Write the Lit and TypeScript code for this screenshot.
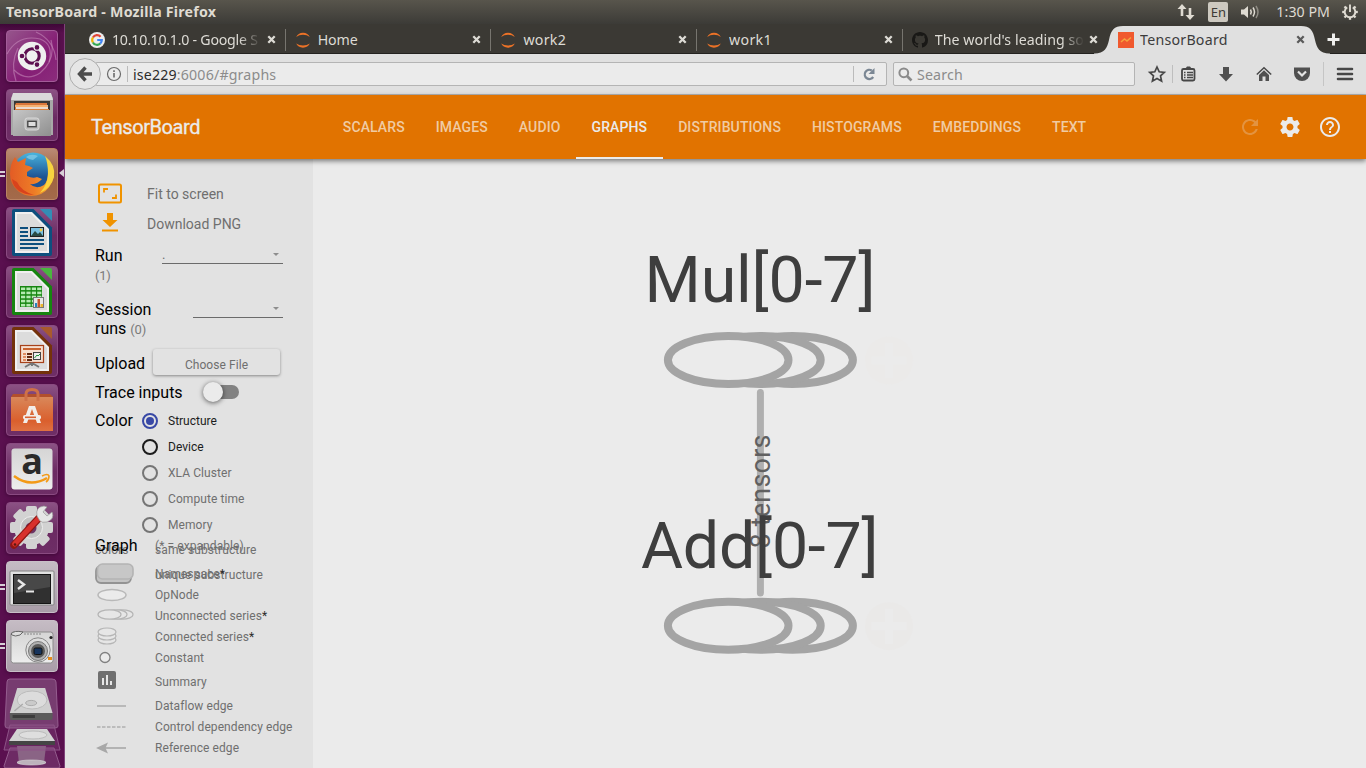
import { LitElement, html, svg, css } from "lit";
import { customElement } from "lit/decorators.js";
import { classMap } from "lit/directives/class-map.js";
import { styleMap } from "lit/directives/style-map.js";

/* ---------- Unity launcher ---------- */

const office = (frame: string, flap: string, body: unknown) => svg`
  <path d="M8 2H27.500L46 20.500V47Q46 49 44 49H8Q6 49 6 47V4Q6 2 8 2Z" fill=${frame}/>
  <path d="M34 2H44Q46 2 46 4V14Z" fill=${flap}/>
  <path d="M9 5H26L43 22V46H9Z" fill="#f0f0f0"/>
  <path d="M11 7H25L41 23V44H11Z" fill="#dcdcdc"/>${body}`;

const drive = svg`
  <path d="M11 10H41L49 35H3Z" fill="#cfcfcf"/>
  <path d="M3 35H49V40Q49 42 46 42H6Q3 42 3 40Z" fill="#5b5b5b"/>
  <path d="M6 37H30V40H6Z" fill="#3c3c3c"/>
  <ellipse cx="27" cy="22" rx="16" ry="9" fill="#dcdcdc" stroke="#bbb"/>
  <ellipse cx="26" cy="25" rx="6" ry="2.6" fill="#cacaca" stroke="#aaa"/>
  <path d="M8 33L17 26" stroke="#aaa" stroke-width="1.5"/>`;

const icons: { art: unknown; tile: string; pips?: boolean; focus?: boolean }[] = [
  { tile: "dash", art: svg`
    <g fill="none" stroke="#d7a3cd" stroke-opacity=".45" stroke-width="1.2">
      <path d="M1 24Q12 4 34 9Q48 14 43 32"/><path d="M45 10Q50 30 34 43Q20 52 8 40"/>
      <path d="M10 51Q4 34 12 18"/><path d="M30 2Q48 10 50 30"/></g>
    <circle cx="26" cy="26" r="14.2" fill="#efefef"/>
    <circle cx="26" cy="26" r="7.2" fill="none" stroke="#5d0e50" stroke-width="3.1"/>
    <g fill="#5d0e50" stroke="#efefef" stroke-width="1.1"><circle cx="16" cy="26" r="2.9"/>
    <circle cx="31" cy="17.4" r="2.9"/><circle cx="31" cy="34.6" r="2.9"/></g>` },
  { tile: "plain", art: svg`
    <path d="M7 5H45L47 9V46H5V9Z" fill="#a8a8a8"/><path d="M7 4H45L47 11H5Z" fill="#dadada"/>
    <rect x="8" y="12" width="36" height="11" fill="#373737"/>
    <path d="M10 14H41V24H9V16Z" fill="#d8763b"/><rect x="9" y="16" width="33" height="2" fill="#f3b173"/>
    <rect x="10" y="18" width="32" height="2" fill="#eadbd0"/><rect x="9" y="20" width="34" height="3" fill="#db803c"/>
    <path d="M7 21H45V47H7Z" fill="url(#metal)"/>
    <rect x="19" y="29" width="14" height="12" rx="2.5" fill="#bdbdbd" stroke="#d9d9d9"/>
    <rect x="21.8" y="32.3" width="8.4" height="5.4" fill="#ddd" stroke="#484848" stroke-width="1.4"/>` },
  { tile: "fox", pips: true, focus: true, art: svg`
    <circle cx="27" cy="25" r="20.5" fill="url(#globe)"/>
    <path d="M20 9Q25 5 32 8L27 12L23 11Z" fill="#87cde8" opacity=".7"/>
    <path d="M4 26Q4 16 9 9L12 14L20 10L19 17Q24 18 27 20L21 24L21 28Q27 31 31 29L36 31Q31 37 24 36Q30 42 38 37Q42 33 42 24L48 28Q45 41 35 46Q22 51 12 43Q4 36 4 26Z" fill="url(#fire)"/>
    <path d="M39 8Q50 17 48 29Q45 40 34 45Q42 36 42 26Q42 15 39 8Z" fill="#f8d43f"/>
    <path d="M6 31Q8 46 28 47Q15 43 11 34Z" fill="#d8431d"/>` },
  { tile: "plain", art: office("#0d4f7e", "#338db5", svg`
    <g stroke="#0d4f7e" stroke-width="2"><path d="M14 21H22M14 25H22M14 29H22M14 33H38M14 37H38M14 41H32"/></g>
    <rect x="24.500" y="20.500" width="13" height="9" fill="#7bc1e2" stroke="#222"/>
    <path d="M25 29L29 24L32 27L34 25L37 29Z" fill="#294b45"/><circle cx="35" cy="23" r="1.4" fill="#f4c63f"/>`) },
  { tile: "plain", art: office("#168510", "#4ab63f", svg`
    <rect x="14" y="20" width="22" height="21" fill="#168510"/>
    <g fill="#b5eab1">${[21.5, 25.6, 29.7, 33.8, 37.9].map((y) => [15, 20.4, 25.8, 31.2].map((x) => svg`<rect x=${x} y=${y} width="4.2" height="2.6"/>`))}</g>
    <rect x="27.5" y="31.5" width="10" height="10" fill="#e7e7e7" stroke="#777"/>
    <path d="M29 41V37H31V41Z" fill="#2684bd"/><path d="M31.5 41V33H34V41Z" fill="#c7532c"/><path d="M34.5 41V38H37V41Z" fill="#eab52e"/>`) },
  { tile: "plain", art: office("#74320b", "#a85a2d", svg`
    <rect x="14.5" y="20.5" width="23" height="17" fill="#f6dfd0" stroke="#a7421b" stroke-width="1.2"/>
    <rect x="17" y="23" width="18" height="2" fill="#c9632f"/>
    <path d="M17 29H20M17 32H20M17 35H20" stroke="#df8c62" stroke-width="2"/>
    <path d="M21 29H26M21 32H26M21 35H26" stroke="#632a13" stroke-width="2"/>
    <rect x="27.5" y="27.5" width="7" height="7" fill="#eee" stroke="#444"/><path d="M28.5 33L31 30L32 31L34 29" fill="none" stroke="#23933a"/>
    <path d="M26 38L19 42M26 38L33 42M26 38V41" stroke="#777" stroke-width="2"/>`) },
  { tile: "plain", art: svg`
    <path d="M5 13L7 10H44L47 13V18H5Z" fill="#b24f2c"/><path d="M5 13H47V47H5Z" fill="url(#bag)"/>
    <path d="M20 17V10Q20 5.5 26 5.5Q32 5.5 32 10V17" fill="none" stroke="#cf7148" stroke-width="3"/>
    <path d="M23 22H29L35 39H31L26 25L21 39H17Z" fill="#f2ede9"/><rect x="17" y="31" width="18" height="4.6" rx="2" fill="#f2ede9"/>
    <path d="M19 33.3H30" stroke="#d86334" stroke-width="1.6"/>` },
  { tile: "plain", art: svg`
    <rect x="5.5" y="5.500" width="41" height="41" rx="3" fill="url(#paper)"/>
    <text class="glyph-a" x="26" y="30.500" text-anchor="middle">a</text>
    <path d="M8 33Q24 45 41 35" fill="none" stroke="#f39a17" stroke-width="2.6"/><path d="M36 33Q42 30 43 33Q43 37 40 39" fill="none" stroke="#f39a17" stroke-width="1.6"/>` },
  { tile: "plain", art: svg`
    <g fill="#d2d2d2">${[0, 45, 90, 135].map((a) => svg`<rect x="20" y="4" width="11" height="43" rx="2" transform="rotate(${a} 25.5 25.5)"/>`)}
    <circle cx="25.5" cy="25.5" r="17.5"/></g><circle cx="25.5" cy="25.5" r="11" fill="#c3c3c3" stroke="#eee"/>
    <circle cx="25" cy="26" r="5.5" fill="#6c3565"/>
    <path d="M8 43L33 16" stroke="#901713" stroke-width="7.4" stroke-linecap="round"/><path d="M8.6 42L33 16" stroke="#d8312c" stroke-width="5" stroke-linecap="round"/>
    <path d="M31 14Q29 5 38 4L41 5L37 10L41 14L46 10Q49 17 41 20Q36 21 34 19Z" fill="#e5e5e5" stroke="#999" stroke-width=".7"/><circle cx="9" cy="42.5" r="1.3" fill="#5a1812"/>` },
  { tile: "light", pips: true, art: svg`
    <rect x="4" y="10" width="44" height="34" rx="1" fill="#e1e1e1" stroke="#818181"/>
    <rect x="7.5" y="13.5" width="37" height="29" fill="#303030" stroke="#151515"/><path d="M8 14H44V26L8 32Z" fill="#484848"/>
    <path d="M12 19L18 23.5L12 28" fill="none" stroke="#e8e8e8" stroke-width="2.4"/><path d="M20 30.5H28" stroke="#e8e8e8" stroke-width="2"/>` },
  { tile: "light", pips: true, art: svg`
    <rect x="5" y="12" width="42" height="31" rx="2.5" fill="url(#paper)" stroke="#8b8b8b"/>
    <path d="M5 14Q8 10 17 12L14 15Q9 17 6 15Z" fill="#ddd" stroke="#666"/><path d="M18 14H35" stroke="#888" stroke-dasharray="2 1"/>
    <circle cx="32" cy="30" r="12.2" fill="#dedede" stroke="#888"/><circle cx="32" cy="31" r="9.500" fill="#b0b0b0" stroke="#777"/>
    <circle cx="32" cy="31" r="7" fill="#5a5a5a"/><rect x="28" y="28" width="8" height="6.500" rx="1.5" fill="#17345c" stroke="#111"/>
    <circle cx="45" cy="17.5" r="1.6" fill="#222"/><rect x="42" y="37" width="4" height="3" fill="#e78c1b"/>` },
];

@customElement("unity-launcher")
class UnityLauncher extends LitElement {
  static styles = css`
    :host { display: flex; flex-direction: column; align-items: center; gap: 7px; width: 65px; box-sizing: border-box;
      padding-top: 6px; border-right: 1px solid #80427a; overflow: hidden; flex: none;
      background: linear-gradient(#3e0737 0, #5a104f 9px, #5a104f 100%); }
    .tile { position: relative; flex: none; width: 50px; height: 50px; border: 1px solid #8a4a81; border-radius: 4px;
      background: linear-gradient(#8b5284, #6b2a62 55%, #6e2e66); box-shadow: 0 1px 4px #3d0836; }
    .tile svg { position: absolute; left: -1px; top: -1px; }
    .dash { background: linear-gradient(135deg, #96558c, #851e75 60%, #8b2c7c); border-color: #a35c99; }
    .fox { background: linear-gradient(#b98a75, #a0643f 50%, #a36a4b); border-color: #b98363; }
    .light { background: linear-gradient(#c5bcc4, #a99da8); border-color: #c8bfc7; }
    .pip { position: absolute; left: -7px; width: 5px; height: 2px; background: #d8cfd7; }
    .p1 { top: 22px; } .p2 { top: 26px; }
    .arrow { position: absolute; left: 52px; top: 20px; border: 4px solid transparent; border-right: 5px solid #d8cfd7; border-left: 0; }
    .stack { flex: none; display: flex; margin-top: -1px; }
    .glyph-a { font: bold 36px "Open Sans", sans-serif; fill: #2a2a2a; }
  `;
  render() {
    return html`
      ${icons.map((i) => html`<div class=${classMap({ tile: true, [i.tile]: true })}>
        <svg width="52" height="52" viewBox="0 0 52 52">
          <defs>
            <linearGradient id="metal" x2="1" y2="1"><stop stop-color="#c6c6c6"/><stop offset="1" stop-color="#8f8f8f"/></linearGradient>
            <linearGradient id="globe" x2="0" y2="1"><stop stop-color="#49b5df"/><stop offset=".6" stop-color="#1d5393"/></linearGradient>
            <linearGradient id="fire"><stop stop-color="#e35c25"/><stop offset=".55" stop-color="#ee7c26"/><stop offset="1" stop-color="#f6b731"/></linearGradient>
            <linearGradient id="bag" x2="0" y2="1"><stop stop-color="#d9885a"/><stop offset=".7" stop-color="#da5f2d"/><stop offset="1" stop-color="#df7142"/></linearGradient>
            <linearGradient id="paper" x2="0" y2="1"><stop stop-color="#d5d5d5"/><stop offset="1" stop-color="#ededed"/></linearGradient>
          </defs>${i.art}</svg>
        ${i.pips ? html`<i class="pip p1"></i><i class="pip p2"></i>` : ""}
        ${i.focus ? html`<i class="arrow"></i>` : ""}
      </div>`)}
      <svg class="stack" width="60" height="92" viewBox="0 0 60 92">
        <path d="M2 88L8 70H52L58 88Q58 90 56 90H4Q2 90 2 88Z" fill="#6d2a64" stroke="#935c8d"/>
        <path d="M15 68H44L42 85H17Z" fill="#8a6485"/><ellipse cx="29.500" cy="84.500" rx="14.500" ry="2.500" fill="#bdb3bc" stroke="#ddd" stroke-width=".6"/>
        <path d="M8 1H50Q54 1 54 4L56 48Q56 50 53 50H5Q3 50 3 47L5 4Q5 1 8 1Z" fill="#773c70" stroke="#955d8f"/>
        <g transform="translate(5 0) scale(.93 1)">${drive}</g>
        <path d="M2 72L8 47H52L58 72Z" fill="#8d5387" fill-opacity=".3" stroke="#8d5387"/>
        <path d="M15 51H45L53 63H7Z" fill="#d3d3d3"/><path d="M7 63H53V67H7Z" fill="#454545"/><ellipse cx="31" cy="57" rx="14" ry="4" fill="#dedede" stroke="#bbb"/>
      </svg>`;
  }
}

/* ---------- Browser chrome ---------- */

const jupiter = svg`<path d="M1.200 5Q3 1 8 .8Q13 1 14.800 5Q12 2.800 8 2.800Q4 2.800 1.200 5Z" fill="#ec7227"/>
  <path d="M1.200 11.500Q4 13.500 8 13.500Q12 13.500 14.800 11.500Q13 15.500 8 15.700Q3 15.500 1.200 11.500Z" fill="#ec7227"/>`;
const google = svg`<circle cx="8" cy="8" r="8" fill="#ededed"/>
  <g fill="none" stroke-width="2.200"><path d="M11.600 4.700A4.800 4.800 0 0 0 3.900 5.500" stroke="#e04335"/><path d="M3.900 5.500A4.800 4.800 0 0 0 3.900 10.500" stroke="#edb405"/>
  <path d="M3.900 10.500A4.800 4.800 0 0 0 11.300 11.500" stroke="#34a853"/><path d="M11.200 11.600A4.800 4.800 0 0 0 12.800 8H8.200" stroke="#4285f4"/></g>`;
const github = svg`<path fill="#191816" d="M8 0C3.580 0 0 3.580 0 8c0 3.540 2.290 6.530 5.470 7.590.4.070.55-.17.55-.38 0-.19-.01-.82-.01-1.490-2.010.37-2.530-.49-2.690-.94-.09-.23-.48-.94-.82-1.130-.28-.15-.68-.52-.01-.53.63-.01 1.080.58 1.230.82.72 1.210 1.870.87 2.330.66.070-.52.28-.87.51-1.070-1.780-.2-3.640-.89-3.640-3.950 0-.87.31-1.590.82-2.150-.08-.2-.36-1.020.08-2.120 0 0 .67-.21 2.200.82.64-.18 1.320-.27 2-.27s1.360.09 2 .27c1.530-1.040 2.200-.82 2.200-.82.44 1.100.16 1.920.08 2.120.51.56.82 1.270.82 2.150 0 3.070-1.870 3.750-3.650 3.950.29.25.54.73.54 1.480 0 1.070-.01 1.930-.01 2.200 0 .21.15.46.55.38A8.010 8.010 0 0 0 16 8c0-4.420-3.580-8-8-8z"/>`;

const closeX = html`<svg class="x" width="9" height="9" viewBox="0 0 9 9"><path d="M1.300 1.300L7.700 7.700M7.700 1.300L1.300 7.700" stroke="currentColor" stroke-width="2.300"/></svg>`;

@customElement("browser-tabs")
class BrowserTabs extends LitElement {
  static styles = css`
    :host { display: flex; height: 30px; box-sizing: border-box; background: #3b3934; border-bottom: 1px solid #23221f;
      padding-left: 15px; position: relative; color: #dddbd5; font: 14.2px "Noto Sans", sans-serif; flex: none; }
    .tab { display: flex; align-items: center; width: 205.700px; box-sizing: border-box; height: 31px; padding-left: 9px; flex: none; position: relative; }
    .tab + .tab::before { content: ""; position: absolute; left: -1px; top: 5px; height: 22px; width: 1px; background: #77756f; }
    .label { margin-left: 7px; width: 148px; white-space: nowrap; overflow: hidden; line-height: 22px; }
    .fade { mask-image: linear-gradient(90deg, #000 127px, transparent 149px); }
    .x { margin-left: 6.500px; color: #dddbd5; }
    .active { position: absolute; left: 1029px; top: 0; }
    .top { position: absolute; left: 1053px; top: 0; height: 31px; display: flex; align-items: center; color: #3c3c3c; letter-spacing: .25px; }
    .top .label { margin-left: 6px; }
    .top .x { color: #5a5a5a; margin-left: 7.500px; }
    .plus { margin-left: 21px; }
  `;
  render() {
    const tabs: [unknown, string, number, boolean][] = [
      [google, "10.10.10.1.0 - Google S", -0.25, true], [jupiter, "Home", -0.1, false],
      [jupiter, "work2", 0.3, false], [jupiter, "work1", 0.3, false], [github, "The world's leading so", 0.05, true]];
    return html`
      ${tabs.map(([icon, label, sp, fade]) => html`<div class="tab"><svg width="16" height="16">${icon}</svg>
        <span class=${classMap({ label: true, fade })} style=${styleMap({ letterSpacing: sp + "px" })}>${label}</span>${closeX}</div>`)}
      <svg class="active" width="240" height="30"><path d="M0 30V29.500C11 29.500 13 24 15 16C17 6 20 2 29 2H207C216 2 219 6 221 16C223 24 225 29.500 236 29.500V30Z" fill="#e0e0e0"/></svg>
      <div class="top"><svg width="16" height="16"><rect width="16" height="16" fill="#f0592e"/><path d="M3 10L6.500 7L9 9L13 5.500" fill="none" stroke="#f4a23e" stroke-width="1.600"/></svg>
        <span class="label">TensorBoard</span>${closeX}
        <svg class="plus" width="15" height="15"><path d="M7.500 1.500V13.500M1.500 7.500H13.500" stroke="#f0f0ee" stroke-width="3"/></svg></div>`;
  }
}

@customElement("browser-toolbar")
class BrowserToolbar extends LitElement {
  static styles = css`
    :host { display: flex; height: 41px; box-sizing: border-box; border-bottom: 1px solid #b4b4b4; background: #e0e0e0;
      padding: 8px 0 0 30px; position: relative; font: 14.2px/24px "Noto Sans", sans-serif; color: #8c8c8c; flex: none; }
    .field { box-sizing: border-box; height: 24px; border: 1px solid #b4b4b4; border-radius: 2px; background: #ebebeb; display: flex; align-items: center; }
    .url { width: 792px; padding-left: 10px; }
    .search { width: 242px; margin-left: 6px; padding-left: 4px; gap: 4px; }
    .host { color: #2c2c2c; }
    .bar { width: 1px; height: 16px; background: #bbb; margin: 0 5px; }
    .addr { flex: 1; line-height: 24px; padding-top: 1px; white-space: nowrap; letter-spacing: .17px; }
    .reload { margin-right: 10px; margin-left: 3px; }
    .back { position: absolute; left: 4px; top: 4px; }
    .tools { height: 24px; }
    .q { line-height: 24px; padding-top: 1px; letter-spacing: .15px; }
  `;
  render() {
    return html`
      <div class="field url">
        <svg width="16" height="16" viewBox="0 0 16 16"><circle cx="8" cy="8" r="6.500" fill="none" stroke="#6a6a6a" stroke-width="1.200"/><path d="M8 7V11.500M8 4.300V5.900" stroke="#6a6a6a" stroke-width="1.600"/></svg>
        <i class="bar"></i><span class="addr"><span class="host">ise229</span>:6006/#graphs</span><i class="bar"></i>
        <svg class="reload" width="14" height="14" viewBox="0 0 14 14"><path d="M11.200 10A4.600 4.600 0 1 1 9.800 3.500" fill="none" stroke="#7b8794" stroke-width="2.300"/><path d="M12.500 1V7H6.500Z" fill="#7b8794"/></svg>
      </div>
      <div class="field search"><svg width="15" height="15" viewBox="0 0 15 15"><circle cx="5.800" cy="5.800" r="4.400" fill="none" stroke="#8b8b8b" stroke-width="2"/><path d="M9 9L13.500 13.500" stroke="#8b8b8b" stroke-width="2.600"/></svg><span class="q">Search</span></div>
      <svg class="tools" width="231" height="24" viewBox="1135 62 231 24">
        <path d="M1157 67L1159.200 71.800L1164.300 72.400L1160.500 75.900L1161.600 81.200L1157 78.600L1152.400 81.200L1153.500 75.900L1149.700 72.400L1154.800 71.800Z" fill="none" stroke="#474747" stroke-width="1.700"/>
        <path d="M1172.500 65V83" stroke="#bebebe"/>
        <rect x="1182" y="69" width="12.500" height="11.500" rx="1.500" fill="none" stroke="#474747" stroke-width="1.800"/><path d="M1185 69L1187 66.500H1190L1192 69Z" fill="#474747"/><path d="M1184 72.500H1185.500M1187 72.500H1193M1184 75H1185.500M1187 75H1193M1184 77.500H1185.500M1187 77.500H1193" stroke="#474747" stroke-width="1.300"/>
        <path d="M1223 67H1229V74H1233L1226 81.500L1219 74H1223Z" fill="#505050"/>
        <path d="M1256.800 74.500L1264 67.800L1271.200 74.500" fill="none" stroke="#474747" stroke-width="1.500"/><path d="M1259 75L1264 70.300L1269 75V81H1265.500V76.500H1262.500V81H1259Z" fill="#505050"/>
        <path d="M1294 67.500H1310V73A8 8 0 0 1 1294 73Z" fill="#505050"/><path d="M1298 71.500L1302 75.500L1306 71.500" fill="none" stroke="#e4e4e4" stroke-width="2.200"/>
        <path d="M1323.500 62V86" stroke="#c5c5c5"/><path d="M1338 69H1352M1338 74H1352M1338 79H1352" stroke="#474747" stroke-width="2.600" stroke-linecap="round"/>
      </svg>
      <svg class="back" width="32" height="32"><circle cx="16" cy="16" r="15.400" fill="#e6e6e6" stroke="#adadad"/><path d="M23 16H11M16.500 9.500L10.500 16L16.500 22.500" fill="none" stroke="#4c4c4c" stroke-width="3.400"/></svg>`;
  }
}

/* ---------- TensorBoard header ---------- */

@customElement("board-header")
class BoardHeader extends LitElement {
  static styles = css`
    :host { display: flex; align-items: center; height: 64px; background: #e17300; color: #ebebeb; font-family: Roboto, sans-serif;
      box-sizing: border-box; padding: 0 24px 0 26px; position: relative; z-index: 2; flex: none;
      box-shadow: 0 2px 5px rgba(0,0,0,.5); }
    .title { font-size: 20px; letter-spacing: -.43px; width: 236.300px; -webkit-text-stroke: .3px #ebebeb; }
    .tabs { display: flex; height: 64px; flex: 1; }
    .tab { padding: 0 15.500px; font: 500 14px/64px Roboto, sans-serif; color: #f0cba3; box-sizing: border-box; white-space: nowrap; letter-spacing: .11px; }
    .on { color: #ebebeb; border-bottom: 2px solid #ebebeb; line-height: 64px; height: 64px; }
    .icons { display: flex; gap: 16px; }
    .dim { opacity: .27; }
  `;
  render() {
    return html`<div class="title">TensorBoard</div>
      <nav class="tabs">${["SCALARS", "IMAGES", "AUDIO", "GRAPHS", "DISTRIBUTIONS", "HISTOGRAMS", "EMBEDDINGS", "TEXT"].map(
        (t) => html`<span class=${classMap({ tab: true, on: t === "GRAPHS" })}>${t}</span>`)}</nav>
      <div class="icons">
        <svg class="dim" width="24" height="24" fill="#ebebeb"><path d="M17.650 6.350C16.200 4.900 14.210 4 12 4c-4.420 0-7.990 3.580-7.990 8s3.570 8 7.990 8c3.730 0 6.840-2.550 7.730-6h-2.080c-.82 2.330-3.040 4-5.650 4-3.310 0-6-2.690-6-6s2.690-6 6-6c1.660 0 3.140.69 4.220 1.780L13 11h7V4l-2.350 2.350z"/></svg>
        <svg width="24" height="24" fill="#ebebeb"><path d="M19.430 12.980c.04-.32.070-.64.070-.98s-.03-.66-.07-.98l2.110-1.650c.19-.15.24-.42.12-.64l-2-3.460c-.12-.22-.39-.3-.61-.22l-2.490 1c-.52-.4-1.080-.73-1.690-.98l-.38-2.650C14.460 2.180 14.250 2 14 2h-4c-.25 0-.46.18-.49.42l-.38 2.650c-.61.25-1.170.59-1.690.98l-2.490-1c-.23-.09-.49 0-.61.22l-2 3.460c-.13.22-.07.49.12.64l2.110 1.650c-.04.32-.07.65-.07.98s.03.66.070.98l-2.110 1.650c-.19.15-.24.42-.12.64l2 3.460c.12.22.39.3.61.22l2.490-1c.52.4 1.080.73 1.690.98l.38 2.650c.03.24.24.42.49.42h4c.25 0 .46-.18.49-.42l.38-2.650c.61-.25 1.170-.59 1.690-.98l2.490 1c.23.09.49 0 .61-.22l2-3.460c.12-.22.070-.49-.12-.64l-2.110-1.650zM12 15.500c-1.930 0-3.500-1.570-3.500-3.500s1.570-3.500 3.500-3.500 3.500 1.570 3.500 3.500-1.570 3.500-3.500 3.500z"/></svg>
        <svg width="24" height="24" fill="#ebebeb"><path d="M11 18h2v-2h-2v2zm1-16C6.480 2 2 6.480 2 12s4.480 10 10 10 10-4.480 10-10S17.520 2 12 2zm0 18c-4.410 0-8-3.590-8-8s3.590-8 8-8 8 3.590 8 8-3.590 8-8 8zm0-14c-2.210 0-4 1.790-4 4h2c0-1.100.9-2 2-2s2 .9 2 2c0 2-3 1.750-3 5h2c0-2.250 3-2.500 3-5 0-2.210-1.790-4-4-4z"/></svg>
      </div>`;
  }
}

/* ---------- Graph controls ---------- */

const legend: [number, string, boolean, unknown][] = [
  [21, "OpNode", false, svg`<ellipse cx="17" cy="10" rx="14" ry="5.500" fill="#ebebeb" stroke="#b8b8b8" stroke-width="1.500"/>`],
  [21, "Unconnected series", true, svg`<g fill="#e6e6e6" stroke="#b5b5b5" stroke-width="1.200"><ellipse cx="27" cy="8.500" rx="11" ry="4.700"/><ellipse cx="21" cy="8.500" rx="11" ry="4.700"/><ellipse cx="14.500" cy="8.500" rx="11.500" ry="4.700"/></g>`],
  [21, "Connected series", true, svg`<g fill="#e6e6e6" stroke="#b5b5b5" stroke-width="1.200"><ellipse cx="12" cy="13" rx="9" ry="4"/><ellipse cx="12" cy="9" rx="9" ry="4"/><ellipse cx="12" cy="5" rx="9" ry="4"/></g>`],
  [21, "Constant", false, svg`<circle cx="10" cy="9.500" r="5" fill="#ebebeb" stroke="#808080" stroke-width="1.300"/>`],
  [27, "Summary", false, svg`<rect x="3" y="-1" width="18" height="18" rx="2" fill="#6f6f6f"/><path d="M8 6V13M12 3V13M16 9V13" stroke="#e6e6e6" stroke-width="2"/>`],
  [21, "Dataflow edge", false, svg`<path d="M2 10H31" stroke="#b0b0b0" stroke-width="1.600"/>`],
  [21, "Control dependency edge", false, svg`<path d="M2 10H31" stroke="#b0b0b0" stroke-width="1.500" stroke-dasharray="3.500 1.500"/>`],
  [21, "Reference edge", false, svg`<path d="M10 10H31" stroke="#a8a8a8" stroke-width="1.600"/><path d="M1 10L13 4.500L10.500 10L13 15.500Z" fill="#a8a8a8"/>`],
];

@customElement("graph-controls")
class GraphControls extends LitElement {
  static styles = css`
    :host { display: block; width: 248px; box-sizing: border-box; padding: 20px 0 0 30px; background: #e2e2e2; flex: none;
      font: 12px/20px Roboto, sans-serif; color: #6f6f6f; overflow: hidden; }
    .action { display: flex; align-items: center; height: 30px; font-size: 14px; }
    .action svg { margin-right: 22px; }
    .row { display: flex; box-sizing: border-box; }
    .name { font-size: 16px; line-height: 19px; color: #000; flex: none; }
    .num { font-size: 13px; color: #7a7a7a; letter-spacing: -.2px; }
    .run { height: 54px; padding-top: 7px; }
    .run .name { width: 67px; }
    .sess .name { width: 98px; }
    .pick { height: 17px; border-bottom: 1px solid #6b6b6b; display: flex; line-height: 17px; font-size: 13px; }
    .p1 { width: 121px; } .p2 { width: 90px; }
    .pick::after { content: ""; width: 0; height: 0; border: 3.500px solid transparent; border-top-color: #8d8d8d; border-bottom: 0; margin: 7px 4px 0 auto; }
    .upload { height: 29px; align-items: center; margin-top: 1.500px; }
    .upload .name { width: 58px; }
    .btn { width: 127px; height: 26px; border-radius: 3px; text-align: center; line-height: 32px; box-shadow: 0 1px 3px rgba(0,0,0,.4); letter-spacing: .07px; margin-top: -3px; }
    .trace { height: 29px; align-items: center; }
    .trace .name { width: 108px; }
    .toggle { width: 36px; height: 14px; display: flex; align-items: center; border-radius: 7px; background: linear-gradient(90deg, transparent 9px, #828282 9px); }
    .knob { flex: none; width: 20px; height: 20px; border-radius: 50%; background: #ebebeb; box-shadow: 0 1px 5px rgba(0,0,0,.6); }
    .color { margin-top: 1px; }
    .color .name { width: 47px; line-height: 26px; }
    .opt { display: flex; align-items: center; height: 26px; gap: 10px; letter-spacing: .08px; }
    .dot { width: 16px; height: 16px; box-sizing: border-box; border: 2px solid #757575; border-radius: 50%; display: grid; place-items: center; }
    .live { color: #1c1c1c; letter-spacing: 0; } .live .dot { border-color: #1c1c1c; }
    .sel .dot { border-color: #3848a6; }
    .sel .dot::after { content: ""; width: 8px; height: 8px; border-radius: 50%; background: #3848a6; }
    .legend { position: relative; margin-top: -1px; letter-spacing: .08px; }
    .item { display: flex; align-items: center; white-space: nowrap; }
    .item svg { width: 60px; height: 20px; flex: none; overflow: visible; }
    .under { position: absolute; left: 0; top: 6px; }
    .under .item { height: 25px; line-height: 14px; align-items: flex-start; }
    .key { width: 60px; }
    .head { height: 18px; position: relative; }
    .head .name { width: 60px; letter-spacing: 0; }
    .ns { height: 38px; position: relative; margin-bottom: -8px; }
    .star { color: #2c2c2c; }
  `;
  render() {
    const opts = ["Structure", "Device", "XLA Cluster", "Compute time", "Memory"];
    return html`
      <div class="action"><svg width="30" height="24"><rect x="4" y="2.500" width="22" height="18" rx="1.500" fill="none" stroke="#f09300" stroke-width="2"/><path d="M9 10.500V7H13M21 12.500V16H17" fill="none" stroke="#f09300" stroke-width="1.800"/></svg>Fit to screen</div>
      <div class="action"><svg width="30" height="24"><path d="M12 1H18V8H22.500L15 15L7.500 8H12ZM7 17.500H23V19.500H7Z" fill="#f09300"/></svg>Download PNG</div>
      <div class="row run"><span class="name">Run<br><span class="num">(1)</span></span><span class="pick p1">.</span></div>
      <div class="row run sess"><span class="name">Session<br>runs <span class="num">(0)</span></span><span class="pick p2"></span></div>
      <div class="row upload"><span class="name">Upload</span><span class="btn">Choose File</span></div>
      <div class="row trace"><span class="name">Trace inputs</span><span class="toggle"><i class="knob"></i></span></div>
      <div class="row color"><span class="name">Color</span><div>
        ${opts.map((o, i) => html`<div class=${classMap({ opt: true, live: i < 2, sel: i === 0 })}><i class="dot"></i>${o}</div>`)}</div></div>
      <div class="legend">
        <div class="under"><div class="item"><span class="key">colors</span>same substructure</div><div class="item"><span class="key"></span>unique substructure</div></div>
        <div class="item head"><span class="name">Graph</span>(* = expandable)</div>
        <div class="item ns"><svg><rect x="1" y="2" width="35" height="17" rx="5" fill="#c4c4c4" stroke="#939393" stroke-width="1.800"/><rect x="2.500" y="0" width="35.500" height="15" rx="5" fill="#c7c7c7" stroke="#b4b4b4" stroke-width="1.600"/></svg><span>Namespace<span class="star">*</span></span></div>
        ${legend.map(([h, t, star, art]) => html`<div class="item" style=${styleMap({ height: h + "px" })}><svg>${art}</svg><span>${t}${star ? html`<span class="star">*</span>` : ""}</span></div>`)}
      </div>`;
  }
}

/* ---------- Graph canvas ---------- */

@customElement("graph-canvas")
class GraphCanvas extends LitElement {
  static styles = css`
    :host { display: block; flex: 1; background: #ebebeb; font-family: Roboto, sans-serif; overflow: hidden; }
    svg { display: block; }
    .big { font-size: 64.500px; fill: #3e3e3e; }
    .small { font-size: 27px; fill: #606060; }
  `;
  render() {
    const node = (cy: number, glow: string) => svg`<g fill="#ebebeb" stroke="#a4a4a4" stroke-width="8">
      ${[792.6, 760.4, 728.2].map((cx) => svg`<ellipse cx=${cx} cy=${cy} rx="60.300" ry="24"/>`)}</g>
      <circle cx="889" cy=${cy + 0.5} r="24" fill=${glow}/><path d="M889 ${cy - 17}V${cy + 18}M871.500 ${cy + 0.5}H906.500" stroke="#ebebeb" stroke-width="8"/>`;
    return html`<svg width="1053" height="609" viewBox="313 159 1053 609">
      ${node(360, "#ebeae9")}${node(625.7, "#eae9e8")}
      <path d="M760.400 392.500V593" stroke="#afafaf" stroke-width="7" stroke-linecap="round"/>
      <text class="small" text-anchor="middle" textLength="114" transform="translate(770 491.500) rotate(-90)">8 tensors</text>
      <text class="big" x="644.500" y="302" textLength="231">Mul[0-7]</text>
      <text class="big" x="641" y="568" textLength="237.500">Add[0-7]</text>
    </svg>`;
  }
}

/* ---------- Desktop ---------- */

@customElement("app-root")
class AppRoot extends LitElement {
  static styles = css`
    :host { display: flex; flex-direction: column; width: 1366px; height: 768px; overflow: hidden; background: #e0e0e0; }
    .panel { display: flex; justify-content: space-between; height: 24px; flex: none; background: linear-gradient(#58554c, #3c3b37);
      font: 14.200px/24px "Noto Sans", sans-serif; color: #dfdbd2; }
    .title { font-weight: 700; padding-left: 6px; letter-spacing: .22px; font-size: 14.200px; line-height: 23px; }
    .tray { display: flex; align-items: center; }
    .lang { width: 20px; height: 20px; background: #cdc9c0; color: #3d3b36; border-radius: 2px; text-align: center; font-size: 13px; line-height: 20px; margin: 0 12px 0 13px; }
    .time { margin: 0 11px 0 16px; letter-spacing: .05px; }
    .gear { margin-right: 7px; }
    .main { display: flex; flex: 1; min-height: 0; }
    .window { display: flex; flex-direction: column; width: 1301px; }
    .body { display: flex; flex: 1; min-height: 0; }
  `;
  render() {
    return html`
      <div class="panel"><span class="title">TensorBoard - Mozilla Firefox</span>
        <div class="tray">
          <svg width="18" height="18"><path d="M5 13V5M13 5V13" stroke="#dfdbd2" stroke-width="2.600" fill="none"/><path d="M5 1L9.500 6H.5ZM13 17L8.500 12H17.500Z" fill="#dfdbd2"/></svg>
          <span class="lang">En</span>
          <svg width="20" height="18" viewBox="0 0 20 18"><path d="M1 6.500H4L8 3V15L4 11.500H1Z" fill="#dfdbd2"/><path d="M10.500 6.500Q12 9 10.500 11.500M13 4.500Q16 9 13 13.500" fill="none" stroke="#dfdbd2" stroke-width="1.500"/><path d="M16 3Q20 9 16 15" fill="none" stroke="#8f8c84" stroke-width="1.500"/></svg>
          <span class="time">1:30 PM</span>
          <svg class="gear" width="18" height="18" viewBox="-9 -9 18 18"><path d="M-2.800 -4.600A5.300 5.300 0 1 0 2.800 -4.600M0 -7.500V0" fill="none" stroke="#dfdbd2" stroke-width="1.900"/>
            ${[45, 90, 135, 180, 225, 270, 315].map((a) => svg`<path d="M0 -5V-7.800" transform="rotate(${a})" stroke="#dfdbd2" stroke-width="2.300"/>`)}</svg>
        </div></div>
      <div class="main"><unity-launcher></unity-launcher>
        <div class="window"><browser-tabs></browser-tabs><browser-toolbar></browser-toolbar><board-header></board-header>
          <div class="body"><graph-controls></graph-controls><graph-canvas></graph-canvas></div></div></div>`;
  }
}
